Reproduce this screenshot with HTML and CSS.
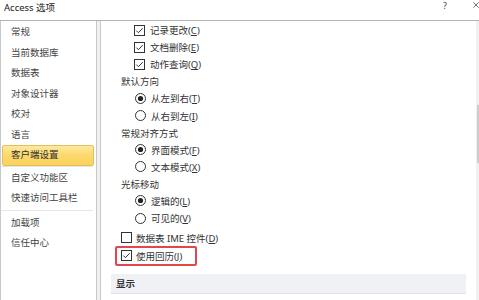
FILE: index.html
```html
<!DOCTYPE html>
<html lang="zh-CN">
<head>
<meta charset="utf-8">
<title>Access 选项</title>
<link rel="stylesheet" href="styles.css">
</head>
<body>
<div class="window">
  <div class="titlebar">
    <span class="title">Access 选项</span>
    <span class="help">?</span>
    <span class="close"><svg width="8" height="8" viewBox="0 0 8 8"><path d="M0.5 0.5 L7.5 7.5 M7.5 0.5 L0.5 7.5" stroke="#444" stroke-width="1" fill="none"/></svg></span>
  </div>
  <div class="main">
    <nav class="nav">
      <div class="nav-item">常规</div>
      <div class="nav-item">当前数据库</div>
      <div class="nav-item">数据表</div>
      <div class="nav-item">对象设计器</div>
      <div class="nav-item">校对</div>
      <div class="nav-item">语言</div>
      <div class="nav-item selected">客户端设置</div>
      <div class="nav-sep"></div>
      <div class="nav-item">自定义功能区</div>
      <div class="nav-item">快速访问工具栏</div>
      <div class="nav-sep sep2"></div>
      <div class="nav-item">加载项</div>
      <div class="nav-item">信任中心</div>
    </nav>
    <div class="pane">
      <div class="content">
        <div class="row lvl2"><svg class="cb" width="11" height="11" viewBox="0 0 11 11"><rect x="0.5" y="0.5" width="10" height="10" fill="#fff" stroke="#333"/><path d="M2.3 5.6 L4.4 7.7 L8.7 3.2" fill="none" stroke="#333"/></svg><span>记录更改(<u>C</u>)</span></div>
        <div class="row lvl2"><svg class="cb" width="11" height="11" viewBox="0 0 11 11"><rect x="0.5" y="0.5" width="10" height="10" fill="#fff" stroke="#333"/><path d="M2.3 5.6 L4.4 7.7 L8.7 3.2" fill="none" stroke="#333"/></svg><span>文档删除(<u>E</u>)</span></div>
        <div class="row lvl2"><svg class="cb" width="11" height="11" viewBox="0 0 11 11"><rect x="0.5" y="0.5" width="10" height="10" fill="#fff" stroke="#333"/><path d="M2.3 5.6 L4.4 7.7 L8.7 3.2" fill="none" stroke="#333"/></svg><span>动作查询(<u>Q</u>)</span></div>
        <div class="row lvl1">默认方向</div>
        <div class="row lvl2r"><svg class="rb" width="11" height="11" viewBox="0 0 11 11"><circle cx="5.5" cy="5.5" r="5" fill="#fff" stroke="#333"/><circle cx="5.5" cy="5.5" r="2.6" fill="#222"/></svg><span>从左到右(<u>T</u>)</span></div>
        <div class="row lvl2r"><svg class="rb" width="11" height="11" viewBox="0 0 11 11"><circle cx="5.5" cy="5.5" r="5" fill="#fff" stroke="#333"/></svg><span>从右到左(<u>I</u>)</span></div>
        <div class="row lvl1">常规对齐方式</div>
        <div class="row lvl2r"><svg class="rb" width="11" height="11" viewBox="0 0 11 11"><circle cx="5.5" cy="5.5" r="5" fill="#fff" stroke="#333"/><circle cx="5.5" cy="5.5" r="2.6" fill="#222"/></svg><span>界面模式(<u>F</u>)</span></div>
        <div class="row lvl2r"><svg class="rb" width="11" height="11" viewBox="0 0 11 11"><circle cx="5.5" cy="5.5" r="5" fill="#fff" stroke="#333"/></svg><span>文本模式(<u>X</u>)</span></div>
        <div class="row lvl1">光标移动</div>
        <div class="row lvl2r"><svg class="rb" width="11" height="11" viewBox="0 0 11 11"><circle cx="5.5" cy="5.5" r="5" fill="#fff" stroke="#333"/><circle cx="5.5" cy="5.5" r="2.6" fill="#222"/></svg><span>逻辑的(<u>L</u>)</span></div>
        <div class="row lvl2r"><svg class="rb" width="11" height="11" viewBox="0 0 11 11"><circle cx="5.5" cy="5.5" r="5" fill="#fff" stroke="#333"/></svg><span>可见的(<u>V</u>)</span></div>
        <div class="row lvl1 ime"><svg class="cb" width="11" height="11" viewBox="0 0 11 11"><rect x="0.5" y="0.5" width="10" height="10" fill="#fff" stroke="#333"/></svg><span class="gap4">数据表 IME 控件(<u>D</u>)</span></div>
        <div class="highlight">
          <div class="row hl-row"><svg class="cb" width="11" height="11" viewBox="0 0 11 11"><rect x="0.5" y="0.5" width="10" height="10" fill="#fff" stroke="#333"/><path d="M2.3 5.6 L4.4 7.7 L8.7 3.2" fill="none" stroke="#333"/></svg><span class="gap4">使用回历(<u>J</u>)</span></div>
        </div>
        <div class="section">显示</div>
      </div>
      <div class="scrollbar"><div class="thumb"></div></div>
    </div>
  </div>
</div>
</body>
</html>
```

FILE: styles.css
```css
html, body {
  margin: 0;
  padding: 0;
  width: 479px;
  height: 300px;
  overflow: hidden;
  background: #fff;
}

.window {
  width: 479px;
  height: 300px;
  overflow: hidden;
  font-family: "Noto Sans", "Noto Sans CJK SC", sans-serif;
  font-size: 9.5px;
  color: #333;
}

.titlebar {
  height: 15px;
  display: flex;
  align-items: center;
  background: #fff;
  position: relative;
}

.title {
  margin-left: 4px;
  font-size: 9.5px;
  color: #222;
  line-height: 15px;
}

.help {
  margin-left: auto;
  margin-right: 26px;
  font-size: 9px;
  color: #444;
  line-height: 10px;
  margin-top: -4px;
}

.close {
  width: 6px;
  height: 8px;
  overflow: hidden;
  display: flex;
  margin-top: -5px;
}

.main {
  display: flex;
  height: 280px;
  margin-top: 5px;
  border-top: 1px solid #b3b3b3;
  background: #f0f0f0;
}

.nav {
  box-sizing: border-box;
  width: 97px;
  flex: none;
  background: #fff;
  border-left: 1px solid #c9c9c9;
  border-right: 1px solid #c9c9c9;
  padding-top: 1px;
  color: #444;
}

.nav-item {
  height: 20.5px;
  line-height: 20.5px;
  padding-left: 10px;
  white-space: nowrap;
}

.nav-item.selected {
  box-sizing: border-box;
  margin: 0 2px 0 1px;
  padding-left: 8px;
  border: 1px solid #e3bf5c;
  border-radius: 2px;
  line-height: 18.5px;
  background: linear-gradient(#fde9a2, #fcd96f 45%, #fbd35b);
  color: #333;
}

.nav-sep {
  height: 1px;
  margin: 0.5px 3px 0.5px 0;
  background: #e6e6e6;
}

.nav-sep.sep2 {
  margin: 1.5px 3px 1.5px 0;
}

.pane {
  flex: 1;
  display: flex;
  margin-left: 3px;
  background: #fff;
  border-left: 1px solid #c9c9c9;
}

.content {
  width: 375px;
  flex: none;
  padding-top: 0.5px;
}

.row {
  height: 17.1px;
  display: flex;
  align-items: center;
  white-space: nowrap;
}

.row u {
  text-decoration-thickness: 1px;
  text-underline-offset: 1px;
}

.lvl1 {
  padding-left: 20px;
}

.lvl2 {
  padding-left: 33px;
}

.lvl2r {
  padding-left: 34px;
}

.cb {
  flex: none;
  margin-right: 5px;
}

.rb {
  flex: none;
  margin-right: 5px;
}

.gap4 {
  margin-left: -1px;
}

.ime {
  margin-top: 2.5px;
}

.highlight {
  box-sizing: border-box;
  width: 82px;
  height: 20px;
  margin-left: 14px;
  margin-top: -0.6px;
  border: 2px solid #e2474b;
  border-radius: 2px;
  padding-left: 4px;
  display: flex;
  align-items: center;
}

.hl-row {
  height: 16px;
}

.section {
  box-sizing: border-box;
  height: 20px;
  margin: 8.3px 10px 0 10px;
  padding-left: 5px;
  line-height: 19px;
  background: #f0f1f4;
  border-bottom: 1px solid #e1e2e5;
  font-weight: bold;
  color: #333;
}

.scrollbar {
  width: 17px;
  flex: none;
  background: #f0f0f0;
  padding-top: 84px;
}

.thumb {
  height: 58px;
  margin: 0 1px;
  background: #cdcdcd;
}
```
